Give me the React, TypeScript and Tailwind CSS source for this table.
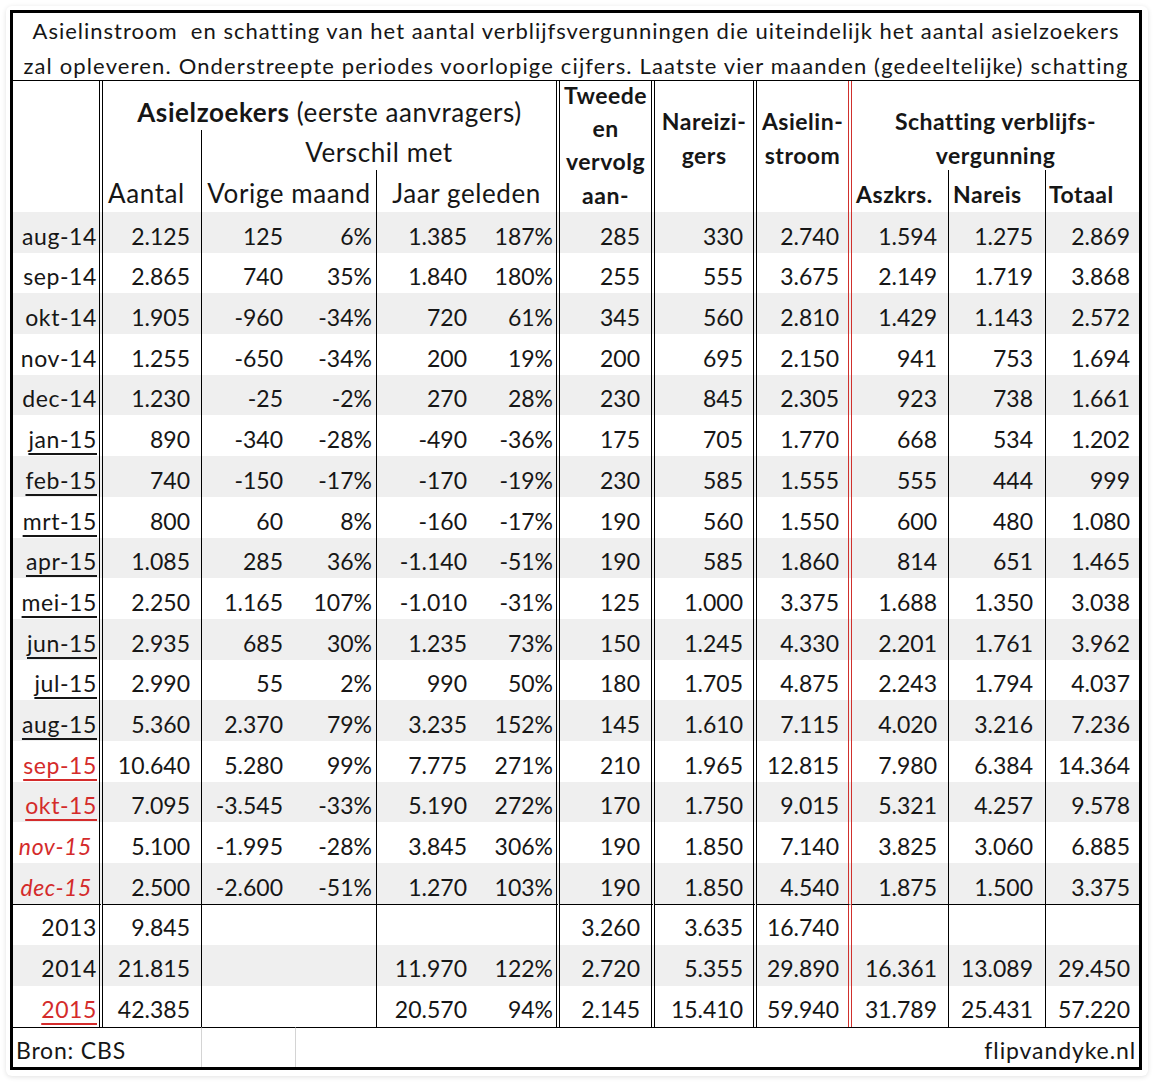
import React from "react";

const RED = "text-[#d42b2b]";

const colW = [
  "w-[90px]",
  "w-[99px]",
  "w-[94px]",
  "w-[81px]",
  "w-[94px]",
  "w-[89px]",
  "w-[95px]",
  "w-[102px]",
  "w-[95px]",
  "w-[97px]",
  "w-[97px]",
  "w-[93px]",
];

const colB = [
  "border-r-4 border-double border-black",
  "border-r border-black",
  "",
  "border-r border-black",
  "",
  "border-r-4 border-double border-black",
  "border-r-4 border-double border-black",
  "border-r-4 border-double border-black",
  "border-r-4 border-double border-[#d0312d]",
  "border-r border-black",
  "border-r border-black",
  "",
];

const colPr = [
  "pr-[2px]",
  "pr-[11px]",
  "pr-[13px]",
  "pr-[4px]",
  "pr-[4px]",
  "pr-[3px]",
  "pr-[11px]",
  "pr-[10px]",
  "pr-[9px]",
  "pr-[11px]",
  "pr-[12px]",
  "pr-[9px]",
];

const months = [
  ["aug-14", "2.125", "125", "6%", "1.385", "187%", "285", "330", "2.740", "1.594", "1.275", "2.869"],
  ["sep-14", "2.865", "740", "35%", "1.840", "180%", "255", "555", "3.675", "2.149", "1.719", "3.868"],
  ["okt-14", "1.905", "-960", "-34%", "720", "61%", "345", "560", "2.810", "1.429", "1.143", "2.572"],
  ["nov-14", "1.255", "-650", "-34%", "200", "19%", "200", "695", "2.150", "941", "753", "1.694"],
  ["dec-14", "1.230", "-25", "-2%", "270", "28%", "230", "845", "2.305", "923", "738", "1.661"],
  ["jan-15", "890", "-340", "-28%", "-490", "-36%", "175", "705", "1.770", "668", "534", "1.202"],
  ["feb-15", "740", "-150", "-17%", "-170", "-19%", "230", "585", "1.555", "555", "444", "999"],
  ["mrt-15", "800", "60", "8%", "-160", "-17%", "190", "560", "1.550", "600", "480", "1.080"],
  ["apr-15", "1.085", "285", "36%", "-1.140", "-51%", "190", "585", "1.860", "814", "651", "1.465"],
  ["mei-15", "2.250", "1.165", "107%", "-1.010", "-31%", "125", "1.000", "3.375", "1.688", "1.350", "3.038"],
  ["jun-15", "2.935", "685", "30%", "1.235", "73%", "150", "1.245", "4.330", "2.201", "1.761", "3.962"],
  ["jul-15", "2.990", "55", "2%", "990", "50%", "180", "1.705", "4.875", "2.243", "1.794", "4.037"],
  ["aug-15", "5.360", "2.370", "79%", "3.235", "152%", "145", "1.610", "7.115", "4.020", "3.216", "7.236"],
  ["sep-15", "10.640", "5.280", "99%", "7.775", "271%", "210", "1.965", "12.815", "7.980", "6.384", "14.364"],
  ["okt-15", "7.095", "-3.545", "-33%", "5.190", "272%", "170", "1.750", "9.015", "5.321", "4.257", "9.578"],
  ["nov-15", "5.100", "-1.995", "-28%", "3.845", "306%", "190", "1.850", "7.140", "3.825", "3.060", "6.885"],
  ["dec-15", "2.500", "-2.600", "-51%", "1.270", "103%", "190", "1.850", "4.540", "1.875", "1.500", "3.375"],
];

const years = [
  ["2013", "9.845", "", "", "", "", "3.260", "3.635", "16.740", "", "", ""],
  ["2014", "21.815", "", "", "11.970", "122%", "2.720", "5.355", "29.890", "16.361", "13.089", "29.450"],
  ["2015", "42.385", "", "", "20.570", "94%", "2.145", "15.410", "59.940", "31.789", "25.431", "57.220"],
];

const UL = "underline decoration-[1.5px] underline-offset-[5px]";

// month label style: plain, underlined (voorlopig), red underlined, red italic (schatting)
function labelClass(i: number) {
  if (i < 5) return "";
  if (i < 13) return UL;
  if (i < 15) return `${UL} ${RED}`;
  return `italic ${RED}`;
}

const cell = "align-bottom text-right whitespace-nowrap leading-[24px] p-0";

function DataRow({
  r,
  shaded,
  label,
  h,
  pb,
  top,
}: {
  r: string[];
  shaded: boolean;
  label: string;
  h: string;
  pb: string;
  top?: boolean;
}) {
  return (
    <tr className={`${h} ${shaded ? "bg-[#efefef]" : ""}`}>
      {r.map((v, j) => (
        <td
          key={j}
          className={`${cell} ${pb} ${colB[j]} ${j === 0 && label.includes("italic") ? "pr-[7px]" : colPr[j]} ${top ? "border-t border-t-black" : ""}`}
        >
          {j === 0 ? <span className={`tracking-[0.6px] ${label}`}>{v}</span> : v}
        </td>
      ))}
    </tr>
  );
}

const boldHead = "text-[23px] font-bold tracking-[0.5px]";

export default function App() {
  return (
    <div className="min-h-screen bg-white pl-[6px] pt-[6px] font-['Lato',sans-serif] text-[#161616]">
      <div className="inline-block rounded-[6px] bg-white pl-[4px] pt-[4px] pr-[6px] pb-[6px] shadow-[0_1px_5px_rgba(0,0,0,0.12)]">
        <div className="w-[1132px] border-[3px] border-black">
          <div className="h-[68px] border-b border-black text-center text-[22px] leading-[35px]">
            <div className="whitespace-pre tracking-[1px]">Asielinstroom  en schatting van het aantal verblijfsvergunningen die uiteindelijk het aantal asielzoekers</div>
            <div className="tracking-[1.15px]">zal opleveren. Onderstreepte periodes voorlopige cijfers. Laatste vier maanden (gedeeltelijke) schatting</div>
          </div>

          <table className="w-[1126px] table-fixed border-separate border-spacing-0 text-[23px]">
            <colgroup>
              {colW.map((w, i) => (
                <col key={i} className={w} />
              ))}
            </colgroup>
            <tbody>
              {/* header row A */}
              <tr className="h-[49px]">
                <td rowSpan={3} className={`p-0 ${colB[0]}`} />
                <td colSpan={5} className={`p-0 pb-[4px] align-bottom text-center text-[26px] leading-[28px] tracking-[0.6px] ${colB[5]}`}>
                  <b>Asielzoekers</b> (eerste aanvragers)
                </td>
                <td rowSpan={3} className={`p-0 align-bottom ${colB[6]}`}>
                  <div className={`flex h-[131px] flex-col justify-end text-center leading-[33.3px] ${boldHead}`}>
                    <div>Tweede</div>
                    <div>en</div>
                    <div>vervolg</div>
                    <div>aan-</div>
                  </div>
                </td>
                <td rowSpan={3} className={`p-0 align-top ${colB[7]}`}>
                  <div className={`h-[131px] pt-[23px] text-center leading-[34px] ${boldHead}`}>
                    <div>Nareizi-</div>
                    <div>gers</div>
                  </div>
                </td>
                <td rowSpan={3} className={`p-0 align-top ${colB[8]}`}>
                  <div className={`h-[131px] pt-[23px] text-center leading-[34px] ${boldHead}`}>
                    <div>Asielin-</div>
                    <div>stroom</div>
                  </div>
                </td>
                <td colSpan={3} rowSpan={2} className="p-0 align-top">
                  <div className={`h-[89px] pt-[23px] text-center leading-[34px] ${boldHead}`}>
                    <div>Schatting verblijfs-</div>
                    <div>vergunning</div>
                  </div>
                </td>
              </tr>
              {/* header row B */}
              <tr className="h-[40px]">
                <td className={`p-0 ${colB[1]}`} />
                <td colSpan={4} className={`p-0 pb-[4px] align-bottom text-center text-[26px] leading-[28px] tracking-[0.6px] ${colB[5]}`}>
                  Verschil met
                </td>
              </tr>
              {/* header row C */}
              <tr className="h-[42px]">
                <td className={`p-0 pl-[5px] pb-[5px] align-bottom text-left text-[26px] leading-[28px] tracking-[0.6px] ${colB[1]}`}>
                  Aantal
                </td>
                <td colSpan={2} className={`p-0 pb-[5px] align-bottom text-center text-[26px] leading-[28px] tracking-[0.6px] ${colB[3]}`}>
                  Vorige maand
                </td>
                <td colSpan={2} className={`p-0 pb-[5px] align-bottom text-center text-[26px] leading-[28px] tracking-[0.6px] ${colB[5]}`}>
                  Jaar geleden
                </td>
                <td className={`p-0 pl-[4px] pb-[6px] align-bottom text-left leading-[24px] ${boldHead} ${colB[9]}`}>
                  Aszkrs.
                </td>
                <td className={`p-0 pl-[4px] pb-[6px] align-bottom text-left leading-[24px] ${boldHead} ${colB[10]}`}>
                  Nareis
                </td>
                <td className={`p-0 pl-[3px] pb-[6px] align-bottom text-left leading-[24px] ${boldHead}`}>Totaal</td>
              </tr>

              {months.map((r, i) => (
                <DataRow key={r[0]} r={r} shaded={i % 2 === 0} label={labelClass(i)} h="h-[40.7px]" pb="pb-[5px]" />
              ))}

              {years.map((r, i) => (
                <DataRow
                  key={r[0]}
                  r={r}
                  shaded={i === 1}
                  top={i === 0}
                  h="h-[41px]"
                  pb="pb-[6px]"
                  label={i === 2 ? `${UL} ${RED}` : ""}
                />
              ))}

              {/* source row */}
              <tr className="h-[40px]">
                <td
                  colSpan={2}
                  className="border-r border-t border-r-[#d4d4d4] border-t-black p-0 pl-[3px] pb-[5px] align-bottom leading-[24px] tracking-[0.8px]"
                >
                  Bron: CBS
                </td>
                <td className="border-r border-t border-r-[#d4d4d4] border-t-black p-0" />
                <td colSpan={9} className="border-t border-black p-0 pr-[3px] pb-[5px] text-right align-bottom leading-[24px] tracking-[0.9px]">
                  flipvandyke.nl
                </td>
              </tr>
            </tbody>
          </table>
        </div>
      </div>
    </div>
  );
}
